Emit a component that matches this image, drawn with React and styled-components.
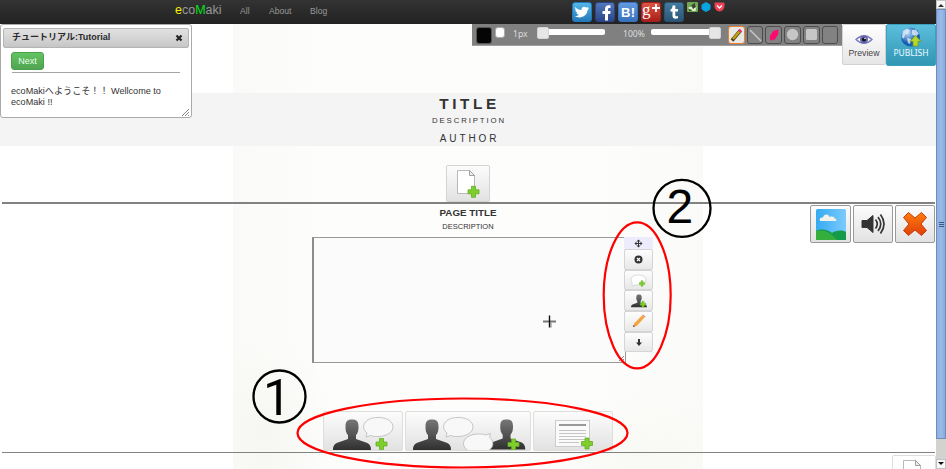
import React from "react";
import styled, { createGlobalStyle } from "styled-components";

const Global = createGlobalStyle`
  * { box-sizing: border-box; }
  body { margin: 0; overflow: hidden; background: #fff; }
  svg { display: block; }
  button { font: inherit; padding: 0; margin: 0; }
`;

const sans = `"Liberation Sans", "Noto Sans CJK JP", sans-serif`;

const Window = styled.div`
  position: relative;
  display: flex;
  width: 946px;
  height: 469px;
  overflow: hidden;
  background: #fff;
  font-family: ${sans};
  font-size: 9px;
  color: #333;
`;
const Viewport = styled.div`
  position: relative;
  width: 936px;
  height: 469px;
  overflow: hidden;
`;

/* Navigation */
const Navbar = styled.header`
  display: flex;
  height: 24px;
  padding-left: 175px;
  background: linear-gradient(#333, #222);
  color: #999;
`;
const Brand = styled.div`
  width: 65px;
  font-size: 12.5px;
  line-height: 20px;
  b { font-weight: 400; color: ${(p) => p.$first}; }
  i { font-style: normal; color: ${(p) => p.$second}; }
`;
const NavLink = styled.a`
  width: ${(p) => p.$w}px;
  font-size: 8.6px;
  line-height: 22px;
`;
const Share = styled.div`
  display: flex;
  gap: 3px;
  padding-top: 2px;
`;
const MiniShare = styled.div`
  display: flex;
  gap: 3px;
`;

/* Floating top-right controls */
const TopControls = styled.div`
  position: absolute;
  top: 24px;
  right: 0;
  display: flex;
  align-items: flex-start;
`;
const DrawBar = styled.div`
  display: flex;
  align-items: center;
  width: 370px;
  height: 22px;
  padding-left: 4px;
  background: #808080;
  border-bottom: 1px solid #a0a0a0;
  color: #ddd;
  font: 8.6px "Noto Sans", sans-serif;
`;
const Swatch = styled.span`
  flex: none;
  width: ${(p) => p.$size}px;
  height: ${(p) => p.$size + 1}px;
  margin-right: ${(p) => p.$gap}px;
  align-self: ${(p) => (p.$top ? "flex-start" : "center")};
  margin-top: ${(p) => (p.$top ? 3 : 1)}px;
  border: 1px solid ${(p) => p.$edge};
  border-radius: 3px;
  background: ${(p) => p.$color};
`;
const BarText = styled.span`
  width: ${(p) => p.$w}px;
  margin-top: -2px;
`;
const Slider = styled.div`
  display: flex;
  align-items: center;
  justify-content: ${(p) => (p.$end ? "flex-end" : "flex-start")};
  width: ${(p) => p.$w}px;
  height: 6px;
  margin: -5px ${(p) => p.$gap}px 0 0;
  border-radius: 2px;
  background: #fff;
`;
const Knob = styled.span`
  width: 12px;
  height: 12px;
  margin-top: 1px;
  border-radius: 2px;
  background: #e6e6e6;
  border: 1px solid #d3d3d3;
`;
const DrawTool = styled.button`
  display: grid;
  place-items: center;
  flex: none;
  width: 16.6px;
  height: 18px;
  margin-right: 2.15px;
  border: 1px solid ${(p) => (p.$active ? "#f08030" : "#4c4c4c")};
  border-radius: 3px;
  background: ${(p) => (p.$active ? "#e8e8e4" : "#828282")};
`;
const BigButton = styled.button`
  display: flex;
  flex-direction: column;
  align-items: center;
  width: ${(p) => p.$w}px;
  height: ${(p) => (p.$primary ? 42 : 41)}px;
  padding-top: ${(p) => (p.$primary ? 2 : 8)}px;
  border: 1px solid ${(p) => (p.$primary ? "#3aa0bd" : "#d2d2d2")};
  border-radius: 2px;
  background: ${(p) => (p.$primary ? "linear-gradient(#5bbedc, #2f96b4)" : "linear-gradient(#fff, #e6e6e6)")};
  color: ${(p) => (p.$primary ? "#eefaff" : "#444")};
  font-family: ${(p) => (p.$primary ? `"Noto Sans"` : `"Liberation Sans"`)}, sans-serif;
  font-size: ${(p) => (p.$primary ? 8.5 : 8.7)}px;
  line-height: ${(p) => (p.$primary ? 11 : 13)}px;
`;

/* Tutorial dialog */
const Dialog = styled.section`
  position: absolute;
  top: 24px;
  left: 0;
  width: 192px;
  height: 94px;
  padding: 3px 2px 0 3px;
  border: 1px solid #aaa;
  border-radius: 3px;
  background: #fff;
`;
const DialogTitle = styled.div`
  display: flex;
  align-items: center;
  justify-content: space-between;
  height: 20px;
  margin-left: -1px;
  padding: 0 5px 3px 8px;
  border: 1px solid #b4b4b4;
  border-radius: 2px;
  background: linear-gradient(#e2e2e2, #c6c6c6);
  color: #2a2a2a;
  font-size: 9px;
  font-weight: 700;
  svg { margin-top: 3px; }
`;
const DialogBody = styled.div`
  padding: 4px 9px 0 7px;
`;
const NextButton = styled.button`
  display: block;
  width: 33px;
  height: 18px;
  border: 1px solid #49a049;
  border-radius: 3px;
  background: linear-gradient(#62c462, #51a351);
  color: #e8ffe8;
  font-size: 9px;
  line-height: 15px;
`;
const Divider = styled.div`
  height: 1px;
  margin: 2px 0 13px 1px;
  background: #a5a5a5;
`;
const Message = styled.p`
  margin: 0;
  font-size: 9.1px;
  line-height: 11px;
`;
const Grip = styled.div`
  position: absolute;
  right: 1px;
  bottom: 1px;
`;

/* Work page */
const Work = styled.main`
  height: 445px;
  padding-top: 69px;
  background:
    linear-gradient(90deg, #fff 233px, transparent 233px, transparent 703px, #fff 703px),
    radial-gradient(ellipse 70px 100px at 265px 410px, #f6f6f2, transparent),
    radial-gradient(ellipse 110px 60px at 640px 430px, #f8f8f4, transparent),
    linear-gradient(90deg, #fafaf8 233px, #fdfdfc 320px, #fdfdfc 600px, #fafaf8 703px);
`;
const TitleBand = styled.div`
  display: flex;
  flex-direction: column;
  align-items: center;
  height: 53px;
  background: #f4f4f4;
`;
const Label = styled.div`
  height: ${(p) => p.$h}px;
  font-size: ${(p) => p.$size}px;
  line-height: ${(p) => p.$h}px;
  letter-spacing: ${(p) => p.$track || 0}px;
  font-weight: ${(p) => (p.$bold ? 700 : 400)};
  padding-left: ${(p) => p.$shift || 0}px;
  white-space: nowrap;
`;
const AddPageRow = styled.div`
  display: flex;
  justify-content: ${(p) => (p.$end ? "flex-end" : "center")};
  height: ${(p) => (p.$end ? 15 : 56)}px;
  padding-top: ${(p) => (p.$end ? 2 : 19)}px;
`;
const GreyButton = styled.button`
  display: grid;
  place-items: center;
  flex: none;
  width: ${(p) => p.$w}px;
  height: ${(p) => p.$h}px;
  border: 1px solid ${(p) => p.$edge || "#d4d4d4"};
  border-radius: 2px;
  background: ${(p) => (p.$faint ? "linear-gradient(#fff, #f8f8f8)" : "linear-gradient(#fcfcfc, #e2e2e2)")};
`;
const Rule = styled.div`
  height: ${(p) => p.$h}px;
  margin: 0 1px 0 2px;
  background: #828282;
`;
const PageHead = styled.div`
  display: grid;
  grid-template-columns: 1fr auto 1fr;
  height: 33px;
`;
const PageTitles = styled.div`
  grid-column: 2;
  display: flex;
  flex-direction: column;
  align-items: center;
  padding-top: 2px;
`;
const Media = styled.div`
  display: flex;
  justify-content: flex-end;
  align-items: flex-start;
  gap: 2px;
  padding: 1px 1px 0 0;
`;
const PanelRow = styled.div`
  display: flex;
  height: 174px;
  padding-left: 312px;
`;
const Panel = styled.div`
  display: flex;
  align-items: flex-end;
  justify-content: flex-end;
  width: 314px;
  height: 126px;
  border: 1px solid #999;
  border-left: 2px solid #8c8c8c;
  background: #fbfbfb;
`;
const Tools = styled.div`
  width: 29px;
  margin-left: -2px;
`;
const ToolHandle = styled.div`
  display: grid;
  place-items: center;
  height: 12px;
  background: #ececfc;
`;
const Tool = styled(GreyButton)`
  width: 29px;
  height: 20.7px;
  border-color: #d5d5d5;
  background: linear-gradient(#fdfdfd, #e8e8e8);
`;
const AddRow = styled.div`
  display: flex;
  gap: 2px;
  height: 41px;
  padding-left: 323px;
`;
const AddButton = styled(GreyButton)`
  height: 40px;
  place-items: end start;
  border-color: #dedede;
`;
const CursorMark = styled.div`
  position: absolute;
  left: 543px;
  top: 314px;
`;

/* Scrollbar */
const Scroll = styled.aside`
  display: flex;
  flex-direction: column;
  width: 10px;
  background: #d4d2cf;
`;
const ScrollEnd = styled.div`
  display: grid;
  place-items: center;
  height: ${(p) => p.$h}px;
  background: #f8f8f8;
  border: 1px solid #c2c2c2;
`;
const Thumb = styled.div`
  display: grid;
  place-items: center;
  height: 430px;
  margin-bottom: 20px;
  border: 1px solid #6d8dbd;
  background: linear-gradient(90deg, #8db0e0, #9abbe8 50%, #87abdc);
`;
const Annotation = styled.svg`
  position: absolute;
  inset: 0;
  pointer-events: none;
`;
const Defs = styled.svg`
  position: absolute;
`;

const Plus = ({ x, y, s = 1 }) => (
  <path
    transform={`translate(${x} ${y}) scale(${s})`}
    d="M-2-5.5h4v3.5h3.5v4H2v3.5h-4V2h-3.5v-4H-2z"
    fill="#7fce2c" stroke="#62ad25" strokeWidth=".8"
  />
);
const Person = ({ x, y, s = 1 }) => (
  <path
    transform={`translate(${x} ${y}) scale(${s})`}
    d="M12.5 7C12.5 1 15 0 19 0s6.5 1 6.5 7c0 5-1 7-2.500 8.500v4l10 3.500c4 1.500 5 4 5 7.500H0c0-3.500 1-6 5-7.500l10-3.500v-4C13.500 14 12.500 12 12.500 7z"
    fill="url(#dark)"
  />
);
const Bubble = ({ x, y, flip }) => (
  <path
    transform={`translate(${x} ${y}) ${flip ? "scale(-1 -1)" : ""}`}
    d="M4 15.500C-3 10 1 0 15 0c9 0 15 4 15 9.500S23 19 15 19c-3 0-5 0-7-1l-5 1.500z"
    fill="#f8f8f8" stroke="#b9b9b9" strokeWidth=".8"
  />
);
const PageIcon = ({ plus = true }) => (
  <svg width="26" height="30" viewBox="0 0 26 30">
    <path d="M2.500 1.500h12l5 5v18h-17z" fill="#fff" stroke="#b9b9b9" />
    <path d="M14.500 1.500v5h5z" fill="#eee" stroke="#999" strokeWidth=".9" />
    {plus && <Plus x={18.5} y={22.800} />}
  </svg>
);
const Tile = ({ top, bottom, children }) => (
  <svg width="20" height="20" viewBox="0 0 20 20">
    <defs>
      <linearGradient id={`t${top.slice(1)}`} x2="0" y2="1">
        <stop stopColor={top} /><stop offset="1" stopColor={bottom} />
      </linearGradient>
    </defs>
    <rect x=".5" y=".5" width="19" height="19" rx="2.500" fill={`url(#t${top.slice(1)})`} stroke={bottom} />
    {children}
  </svg>
);
const tileText = { fill: "#fff", fontFamily: "Liberation Sans", fontWeight: 700 };

const DarkGradient = () => (
  <Defs width="0" height="0">
    <defs>
      <linearGradient id="dark" x2="0" y2="1">
        <stop stopColor="#777" /><stop offset="1" stopColor="#303030" />
      </linearGradient>
    </defs>
  </Defs>
);

export default function App() {
  return (
    <Window>
      <Global />
      <DarkGradient />
      <Viewport>
        <Navbar>
          <Brand $first="#f4f000" $second="#00e418"><b>e</b>co<i>M</i>aki</Brand>
          <NavLink $w={29}>All</NavLink>
          <NavLink $w={41}>About</NavLink>
          <NavLink $w={262}>Blog</NavLink>
          <Share>
            <Tile top="#54b9e8" bottom="#2478b8">
              <path d="M3 5c2 2 4 3 6.500 3C9 5.500 12 3.500 14 5.500l2.500-.5-1 1.500 1.800-.2-1.800 2C15.500 14 8 17.500 3 14c2 0 3-.5 4-1.300-1.500-.2-2.300-1-2.600-2l1.200-.1C4 9.800 3.300 8.800 3.300 7.500l1.200.4C3.200 7 2.700 6.200 3 5z" fill="#fff" />
            </Tile>
            <Tile top="#5578bb" bottom="#29458a">
              <path d="M10 18.500V12H7.500V9H10V7c0-3 1.500-4.200 5.500-3.800v2.700c-2-.1-2.500.2-2.500 1.300V9h2.600l-.4 3H13v6.500z" fill="#fff" />
            </Tile>
            <Tile top="#669ce0" bottom="#3671bd"><text x="3" y="15" fontSize="13" textLength="14" {...tileText}>B!</text></Tile>
            <Tile top="#e05545" bottom="#a61e1a">
              <text x="1" y="13" fontSize="17" fill="#fff" fontFamily="Liberation Serif">g</text>
              <path d="M11 6h8M15 2v8" stroke="#fff" strokeWidth="1.800" />
            </Tile>
            <Tile top="#437da0" bottom="#2b5474">
              <path d="M8.500 3.500h2.800V7H14v2.500h-2.700v3.500c0 1.400 1 1.500 2.700 1v2.300c-3 1-5.500.5-5.500-2.500V9.500H6.500V7.500c1.300-.4 2-1.500 2-4z" fill="#fff" />
            </Tile>
            <MiniShare>
              <svg width="11" height="10"><rect width="11" height="10" rx="1" fill="#72a84f" /><path d="M1.500 5h3V2h4l1 3-1 4h-3L4 7H2z" fill="#dcebd0" /><path d="M4 3l4-2 1 4-3 2zM2 7l3 2H2z" fill="#354b2c" /></svg>
              <svg width="10" height="10"><path d="M5 0.500l4 2.300v4.400L5 9.500 1 7.200V2.800z" fill="#08a4df" stroke="#08a4df" /></svg>
              <svg width="11" height="10"><path d="M1 1h9v3.500a4.500 4.500 0 01-9 0z" fill="#ee4056" stroke="#ee4056" /><path d="M3 3.500l2.500 2.500L8 3.500" fill="none" stroke="#fff" strokeWidth="1.400" /></svg>
            </MiniShare>
          </Share>
        </Navbar>

        <Work>
          <TitleBand>
            <Label $h={22} $size={15.3} $track={3.6} $bold $shift={3}>TITLE</Label>
            <Label $h={12} $size={7.8} $track={1.9} $shift={2}>DESCRIPTION</Label>
            <Label $h={24} $size={10} $track={2.9} $shift={3}>AUTHOR</Label>
          </TitleBand>
          <AddPageRow>
            <GreyButton $w={44} $h={37}><PageIcon /></GreyButton>
          </AddPageRow>
          <Rule $h={2} />
          <PageHead>
            <PageTitles>
              <Label $h={14} $size={9.8} $bold>PAGE TITLE</Label>
              <Label $h={13} $size={7.5}>DESCRIPTION</Label>
            </PageTitles>
            <Media>
              <GreyButton $w={41} $h={38} $edge="#999">
                <svg width="30" height="31">
                  <defs><linearGradient id="sky"><stop stopColor="#35aaf2" /><stop offset="1" stopColor="#7bcbfd" /></linearGradient></defs>
                  <rect width="30" height="31" rx="1.500" fill="url(#sky)" />
                  <path d="M0 22c6-3 12-1 16 2 5-3 10-3 14-1v8H0z" fill="#149a48" />
                  <path d="M0 22c7-2 15 1 21 9H0z" fill="#35ae3d" />
                  <path d="M4 12c-1-3 1-4 3-3.500C8 4 13 5 13.500 8c3-1 5 0 5 1.500 2 0 2.500 2.500 1 2.500z" fill="#f2f2ea" />
                </svg>
              </GreyButton>
              <GreyButton $w={40} $h={38} $edge="#999">
                <svg width="26" height="24" fill="none" stroke="#353535" strokeWidth="2">
                  <path d="M2 8.500h5l6-5v17l-6-5H2z" fill="#333" strokeWidth="1" />
                  <path d="M15.500 7.500q3.500 4.500 0 9M18 5q5.500 7 0 14M20.500 2.500q7 9.500 0 19" strokeWidth="1.700" />
                </svg>
              </GreyButton>
              <GreyButton $w={40} $h={38} $edge="#999">
                <svg width="26" height="26">
                  <defs><linearGradient id="cross" x2="0" y2="1"><stop stopColor="#ff7c0a" /><stop offset="1" stopColor="#df3f0c" /></linearGradient></defs>
                  <path d="M6.500 1.500L13 7l6.500-5.500 5 5L19 13l5.500 6.500-5 5L13 19l-6.500 5.500-5-5L7 13 1.500 6.500z" fill="url(#cross)" stroke="#c73b08" strokeLinejoin="round" />
                </svg>
              </GreyButton>
            </Media>
          </PageHead>
          <PanelRow>
            <Panel>
              <svg width="7" height="7" stroke="#888"><path d="M1 6l5-5M4 6l2-2" /></svg>
            </Panel>
            <Tools>
              <ToolHandle>
                <svg width="9" height="9" fill="#333"><path d="M4.500.5l2 2h-4zM4.500 8.500l2-2h-4zM.5 4.500l2-2v4zM8.500 4.500l-2-2v4z" /><path d="M4 2h1v5H4zM2 4h5v1H2z" /></svg>
              </ToolHandle>
              <Tool><svg width="9" height="9"><circle cx="4.500" cy="4.500" r="4" fill="#333" /><path d="M3 3l3 3M6 3L3 6" stroke="#fff" strokeWidth="1.200" /></svg></Tool>
              <Tool><svg width="18" height="14"><path d="M2 9C-1 5 3 2 8 2s8 2 8 5-4 5-8 5H5l-3 1z" fill="#fff" stroke="#ccc" strokeWidth=".7" /><Plus x={12} y={10.500} s={0.5} /></svg></Tool>
              <Tool><svg width="18" height="14"><Person x={1} y={0.5} s={0.42} /><Plus x={13} y={10.200} s={0.52} /></svg></Tool>
              <Tool><svg width="14" height="14"><path d="M1 13l1.200-3.500L10 1.500l2.500 2L4.700 12z" fill="#f4a443" /><path d="M10 1.500l1-1 2.500 2-1 1z" fill="#e58f70" /><path d="M1 13l.6-2 1.400 1.300z" fill="#444" /></svg></Tool>
              <Tool><svg width="8" height="9"><path d="M3 1h2v3.500h2L4 8 1 4.500h2z" fill="#333" /></svg></Tool>
            </Tools>
          </PanelRow>
          <AddRow>
            <AddButton $w={80}>
              <svg width="78" height="38"><Person x={9} y={7.500} /><Bubble x={39} y={5.5} /><Plus x={57.5} y={32} /></svg>
            </AddButton>
            <AddButton $w={126}>
              <svg width="124" height="38"><Person x={7} y={7.500} /><Bubble x={37} y={5.5} /><Person x={82} y={7.500} s={0.98} /><Bubble x={87.5} y={41} flip /><Plus x={107.5} y={32.500} /></svg>
            </AddButton>
            <AddButton $w={80}>
              <svg width="78" height="38"><rect x="21.500" y="8.500" width="34" height="26" fill="#fafafa" stroke="#ccc" /><path d="M25 13h27" stroke="#999" strokeWidth="2" /><path d="M25 18.500h27M25 21.500h27M25 24.500h27M25 27.500h27M25 30.500h20" stroke="#c5c5c5" /><Plus x={53} y={31.5} /></svg>
            </AddButton>
          </AddRow>
          <Rule $h={1} />
          <AddPageRow $end><GreyButton $w={44} $h={37} $faint $edge="#ddd"><PageIcon plus={false} /></GreyButton></AddPageRow>
        </Work>

        <TopControls>
          <DrawBar>
            <Swatch $size={16} $gap={3} $color="#050505" $edge="#555" />
            <Swatch $size={10} $gap={8} $color="#fff" $edge="#aaa" $top />
            <BarText $w={24}>1px</BarText>
            <Slider $w={68} $gap={18}><Knob /></Slider>
            <BarText $w={28}>100%</BarText>
            <Slider $w={70} $gap={7} $end><Knob /></Slider>
            <DrawTool $active>
              <svg width="13" height="14"><path d="M2 12.500L10 3" stroke="#473b14" strokeWidth="3.500" /><path d="M3 11L9.500 3.500" stroke="#c6a012" strokeWidth="2.500" /><path d="M9.500 3.500L11 2" stroke="#ee2978" strokeWidth="3.500" /></svg>
            </DrawTool>
            <DrawTool><svg width="13" height="14"><path d="M1 2l11 11" stroke="#c5c5c5" strokeWidth="1.500" /></svg></DrawTool>
            <DrawTool><svg width="12" height="14"><path d="M5 3L10.500 1.500 10 6.500 7 11.500 2 12.500 2 8z" fill="#ff0a6c" /></svg></DrawTool>
            <DrawTool><svg width="13" height="13"><circle cx="6.500" cy="6.500" r="5.700" fill="#c6c6c6" /></svg></DrawTool>
            <DrawTool><svg width="13" height="13"><rect x="1" y="1" width="11" height="11" rx="1.500" fill="#c6c6c6" /></svg></DrawTool>
            <DrawTool />
          </DrawBar>
          <BigButton $w={44}>
            <svg width="18" height="14">
              <path d="M1 6.500Q9-1 17 6.500 9 14 1 6.500z" fill="#fff" stroke="#7b78c4" strokeWidth="1.400" />
              <circle cx="9" cy="6.500" r="4" fill="#6966ad" /><circle cx="9" cy="6.500" r="2" fill="#111" /><circle cx="10" cy="5.500" r=".8" fill="#fff" />
            </svg>
            Preview
          </BigButton>
          <BigButton $w={50} $primary>
            <svg width="22" height="20">
              <defs><radialGradient id="globe" cx=".35" cy=".3"><stop stopColor="#b9dcfa" /><stop offset="1" stopColor="#175db2" /></radialGradient></defs>
              <circle cx="10.500" cy="10" r="9.500" fill="url(#globe)" />
              <path d="M3 4l4-2.500 3 2-2 3-3 1-1 4-2-1zM12 3l4-.5 3 4-3 3-4-2zM7 11l4 1-1 5-2-1z" fill="#e0eff9" opacity=".8" />
              <path d="M15.500 8.500l5.500 6h-3V19h-5v-4.500h-3z" fill="#b5d82c" stroke="#71951b" strokeWidth=".7" />
            </svg>
            PUBLISH
          </BigButton>
        </TopControls>

        <Dialog>
          <DialogTitle>
            チュートリアル:Tutorial
            <svg width="8" height="8"><path d="M1.500 1.500l5 5M6.500 1.500l-5 5" stroke="#222" strokeWidth="2.200" /></svg>
          </DialogTitle>
          <DialogBody>
            <NextButton>Next</NextButton>
            <Divider />
            <Message>ecoMakiへようこそ！！ Wellcome to<br />ecoMaki !!</Message>
          </DialogBody>
          <Grip><svg width="8" height="8" stroke="#777" strokeWidth=".9"><path d="M0 8l7-7M3 8l4-4M6 8l1-1" /></svg></Grip>
        </Dialog>

        <CursorMark>
          <svg width="14" height="15"><path d="M0 7.500h13" stroke="#777" strokeWidth="2" /><path d="M8 8.500v5" stroke="#aaa" strokeWidth="1.500" /><path d="M6.500 1.500v12" stroke="#111" strokeWidth="1.400" /></svg>
        </CursorMark>
      </Viewport>

      <Scroll>
        <ScrollEnd $h={9}><svg width="6" height="4"><path d="M0 4l3-3 3 3z" fill="#333" /></svg></ScrollEnd>
        <Thumb><svg width="5" height="7" stroke="#3f5880"><path d="M0 1.500h5M0 3.500h5M0 5.500h5" /></svg></Thumb>
        <ScrollEnd $h={10}><svg width="6" height="4"><path d="M0 0h6L3 3z" fill="#111" /></svg></ScrollEnd>
      </Scroll>

      <Annotation width="946" height="469" fill="none">
        <ellipse cx="462.500" cy="433" rx="165" ry="34.500" stroke="#f00" strokeWidth="2.200" />
        <ellipse cx="637.200" cy="295.300" rx="33.500" ry="73" stroke="#f00" strokeWidth="2.200" />
        <circle cx="279.500" cy="396.500" r="26" stroke="#000" strokeWidth="2.300" />
        <circle cx="682" cy="208.300" r="28.500" stroke="#000" strokeWidth="2.300" />
        <text x="263" y="415" fill="#000" fontFamily="Roboto" fontSize="50">1</text>
        <text x="666.500" y="222.500" fill="#000" fontFamily="Liberation Sans" fontSize="48">2</text>
      </Annotation>
    </Window>
  );
}
